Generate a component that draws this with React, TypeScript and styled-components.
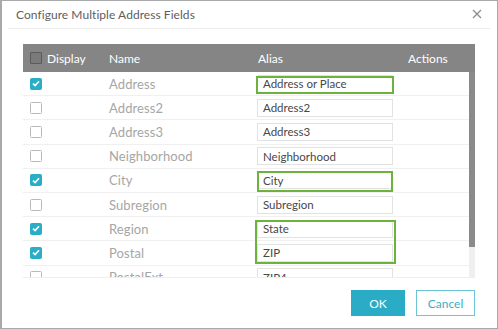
import React from "react";
import styled, { createGlobalStyle } from "styled-components";

const Global = createGlobalStyle`
  html, body { margin: 0; padding: 0; background: #fff; }
  body { font-family: "Lato", "Open Sans", sans-serif; }
  * { box-sizing: border-box; }
`;

const ROW_H = 24.2;

const Dialog = styled.div`
  width: 498px;
  height: 329px;
  border: 1px solid #a9a9a9;
  border-left-width: 2px;
  background: #fff;
  display: flex;
  flex-direction: column;
`;

const TitleBar = styled.div`
  height: 28px;
  margin: 0 7px 0 6px;
  padding: 0 8px 0 8px;
  border-bottom: 1px solid #ececec;
  display: flex;
  align-items: center;
  justify-content: space-between;
`;

const Title = styled.div`
  font-size: 12px;
  color: #5e5e5e;
  letter-spacing: 0.05px;
`;

const CloseBtn = styled.div`
  width: 10px;
  height: 10px;
  display: flex;
  margin-top: -1px;
`;

const Content = styled.div`
  padding: 15px 0 0 21px;
  flex: 1;
  display: flex;
  flex-direction: column;
`;

const Table = styled.div`
  width: 452px;
  display: flex;
  flex-direction: column;
`;

const cols = "86px 148px 151px 1fr";

const HeaderRow = styled.div`
  height: 28px;
  background: #858585;
  display: grid;
  grid-template-columns: ${cols};
  align-items: center;
  color: #fff;
  font-size: 12px;
`;

const HeadCell = styled.div<{ $pad?: number }>`
  display: flex;
  align-items: center;
  padding-left: ${(p) => p.$pad ?? 0}px;
  gap: 5px;
`;

const HeadBox = styled.span`
  width: 12px;
  height: 12px;
  border: 1px solid #5a5a5a;
  background: #7a7a7a;
  border-radius: 1px;
  display: inline-block;
`;

const Body = styled.div`
  height: 206px;
  display: flex;
  border-bottom: 1px solid #eeeeee;
`;

const Viewport = styled.div`
  flex: 1;
  overflow: hidden;
`;

const ScrollTrack = styled.div`
  width: 6px;
  background: #efefef;
  display: flex;
  flex-direction: column;
`;

const ScrollThumb = styled.div`
  background: #8a8a8a;
`;

const Rows = styled.div`
  position: relative;
`;

const Row = styled.div`
  height: ${ROW_H}px;
  display: grid;
  grid-template-columns: ${cols};
  align-items: center;
  border-bottom: 1px solid #f0f0f0;
`;

const CheckCell = styled.div`
  padding-left: 7px;
  display: flex;
  align-items: center;
`;

const Check = styled.span<{ $on: boolean }>`
  width: 12px;
  height: 12px;
  border-radius: 1.5px;
  border: 1px solid ${(p) => (p.$on ? "#2aaec7" : "#b9b9b9")};
  background: ${(p) => (p.$on ? "#2aaec7" : "#fff")};
  display: flex;
  align-items: center;
  justify-content: center;
`;

const NameCell = styled.div`
  font-size: 13px;
  color: #a6a6a6;
  letter-spacing: 0.1px;
`;

const AliasInput = styled.div`
  width: 136px;
  height: 18px;
  border: 1px solid #e2e2e2;
  padding-left: 5px;
  font-size: 11.5px;
  color: #474747;
  display: flex;
  align-items: center;
`;

const Mark = styled.div`
  position: absolute;
  border: 2px solid #6cb23c;
  pointer-events: none;
`;

const Footer = styled.div`
  width: 452px;
  display: flex;
  justify-content: flex-end;
  gap: 11px;
  margin-top: 12px;
`;

const Button = styled.button<{ $primary?: boolean }>`
  height: 26px;
  width: ${(p) => (p.$primary ? 54 : 59)}px;
  font-family: inherit;
  font-size: 12px;
  border: 1px solid ${(p) => (p.$primary ? "#2aacc6" : "#6cc5d6")};
  background: ${(p) => (p.$primary ? "#2aacc6" : "#fff")};
  color: ${(p) => (p.$primary ? "#fff" : "#3aafc5")};
  padding: 0;
`;

const rows = [
  { name: "Address", alias: "Address or Place", on: true },
  { name: "Address2", alias: "Address2", on: false },
  { name: "Address3", alias: "Address3", on: false },
  { name: "Neighborhood", alias: "Neighborhood", on: false },
  { name: "City", alias: "City", on: true },
  { name: "Subregion", alias: "Subregion", on: false },
  { name: "Region", alias: "State", on: true },
  { name: "Postal", alias: "ZIP", on: true },
  { name: "PostalExt", alias: "ZIP4", on: false },
  { name: "CountryCode", alias: "Country", on: false },
];

const marks = [
  { left: 233, top: 4, width: 138, height: 18 },
  { left: 234, top: 99, width: 136, height: 21 },
  { left: 232, top: 148, width: 141, height: 44 },
];

const Tick = () => (
  <svg width="8" height="7" viewBox="0 0 8 7">
    <path d="M1 3.6 L3.1 5.6 L7 1.2" fill="none" stroke="#fff" strokeWidth="1.6" />
  </svg>
);

const viewH = 206;
const contentH = rows.length * ROW_H;
const thumbH = Math.round((viewH * viewH) / contentH);

export default function App() {
  return (
    <>
      <Global />
      <Dialog>
        <TitleBar>
          <Title>Configure Multiple Address Fields</Title>
          <CloseBtn>
            <svg width="10" height="10" viewBox="0 0 10 10">
              <path d="M1 1 L9 9 M9 1 L1 9" stroke="#8a8a8a" strokeWidth="1.2" />
            </svg>
          </CloseBtn>
        </TitleBar>
        <Content>
          <Table>
            <HeaderRow>
              <HeadCell $pad={7}>
                <HeadBox />
                Display
              </HeadCell>
              <HeadCell>Name</HeadCell>
              <HeadCell $pad={1}>Alias</HeadCell>
              <HeadCell>Actions</HeadCell>
            </HeaderRow>
            <Body>
              <Viewport>
                <Rows>
                  {rows.map((r) => (
                    <Row key={r.name}>
                      <CheckCell>
                        <Check $on={r.on}>{r.on && <Tick />}</Check>
                      </CheckCell>
                      <NameCell>{r.name}</NameCell>
                      <div>
                        <AliasInput>{r.alias}</AliasInput>
                      </div>
                      <div />
                    </Row>
                  ))}
                  {marks.map((m, i) => (
                    <Mark key={i} style={{ left: m.left, top: m.top, width: m.width, height: m.height }} />
                  ))}
                </Rows>
              </Viewport>
              <ScrollTrack>
                <ScrollThumb style={{ height: thumbH }} />
              </ScrollTrack>
            </Body>
          </Table>
          <Footer>
            <Button $primary>OK</Button>
            <Button>Cancel</Button>
          </Footer>
        </Content>
      </Dialog>
    </>
  );
}
